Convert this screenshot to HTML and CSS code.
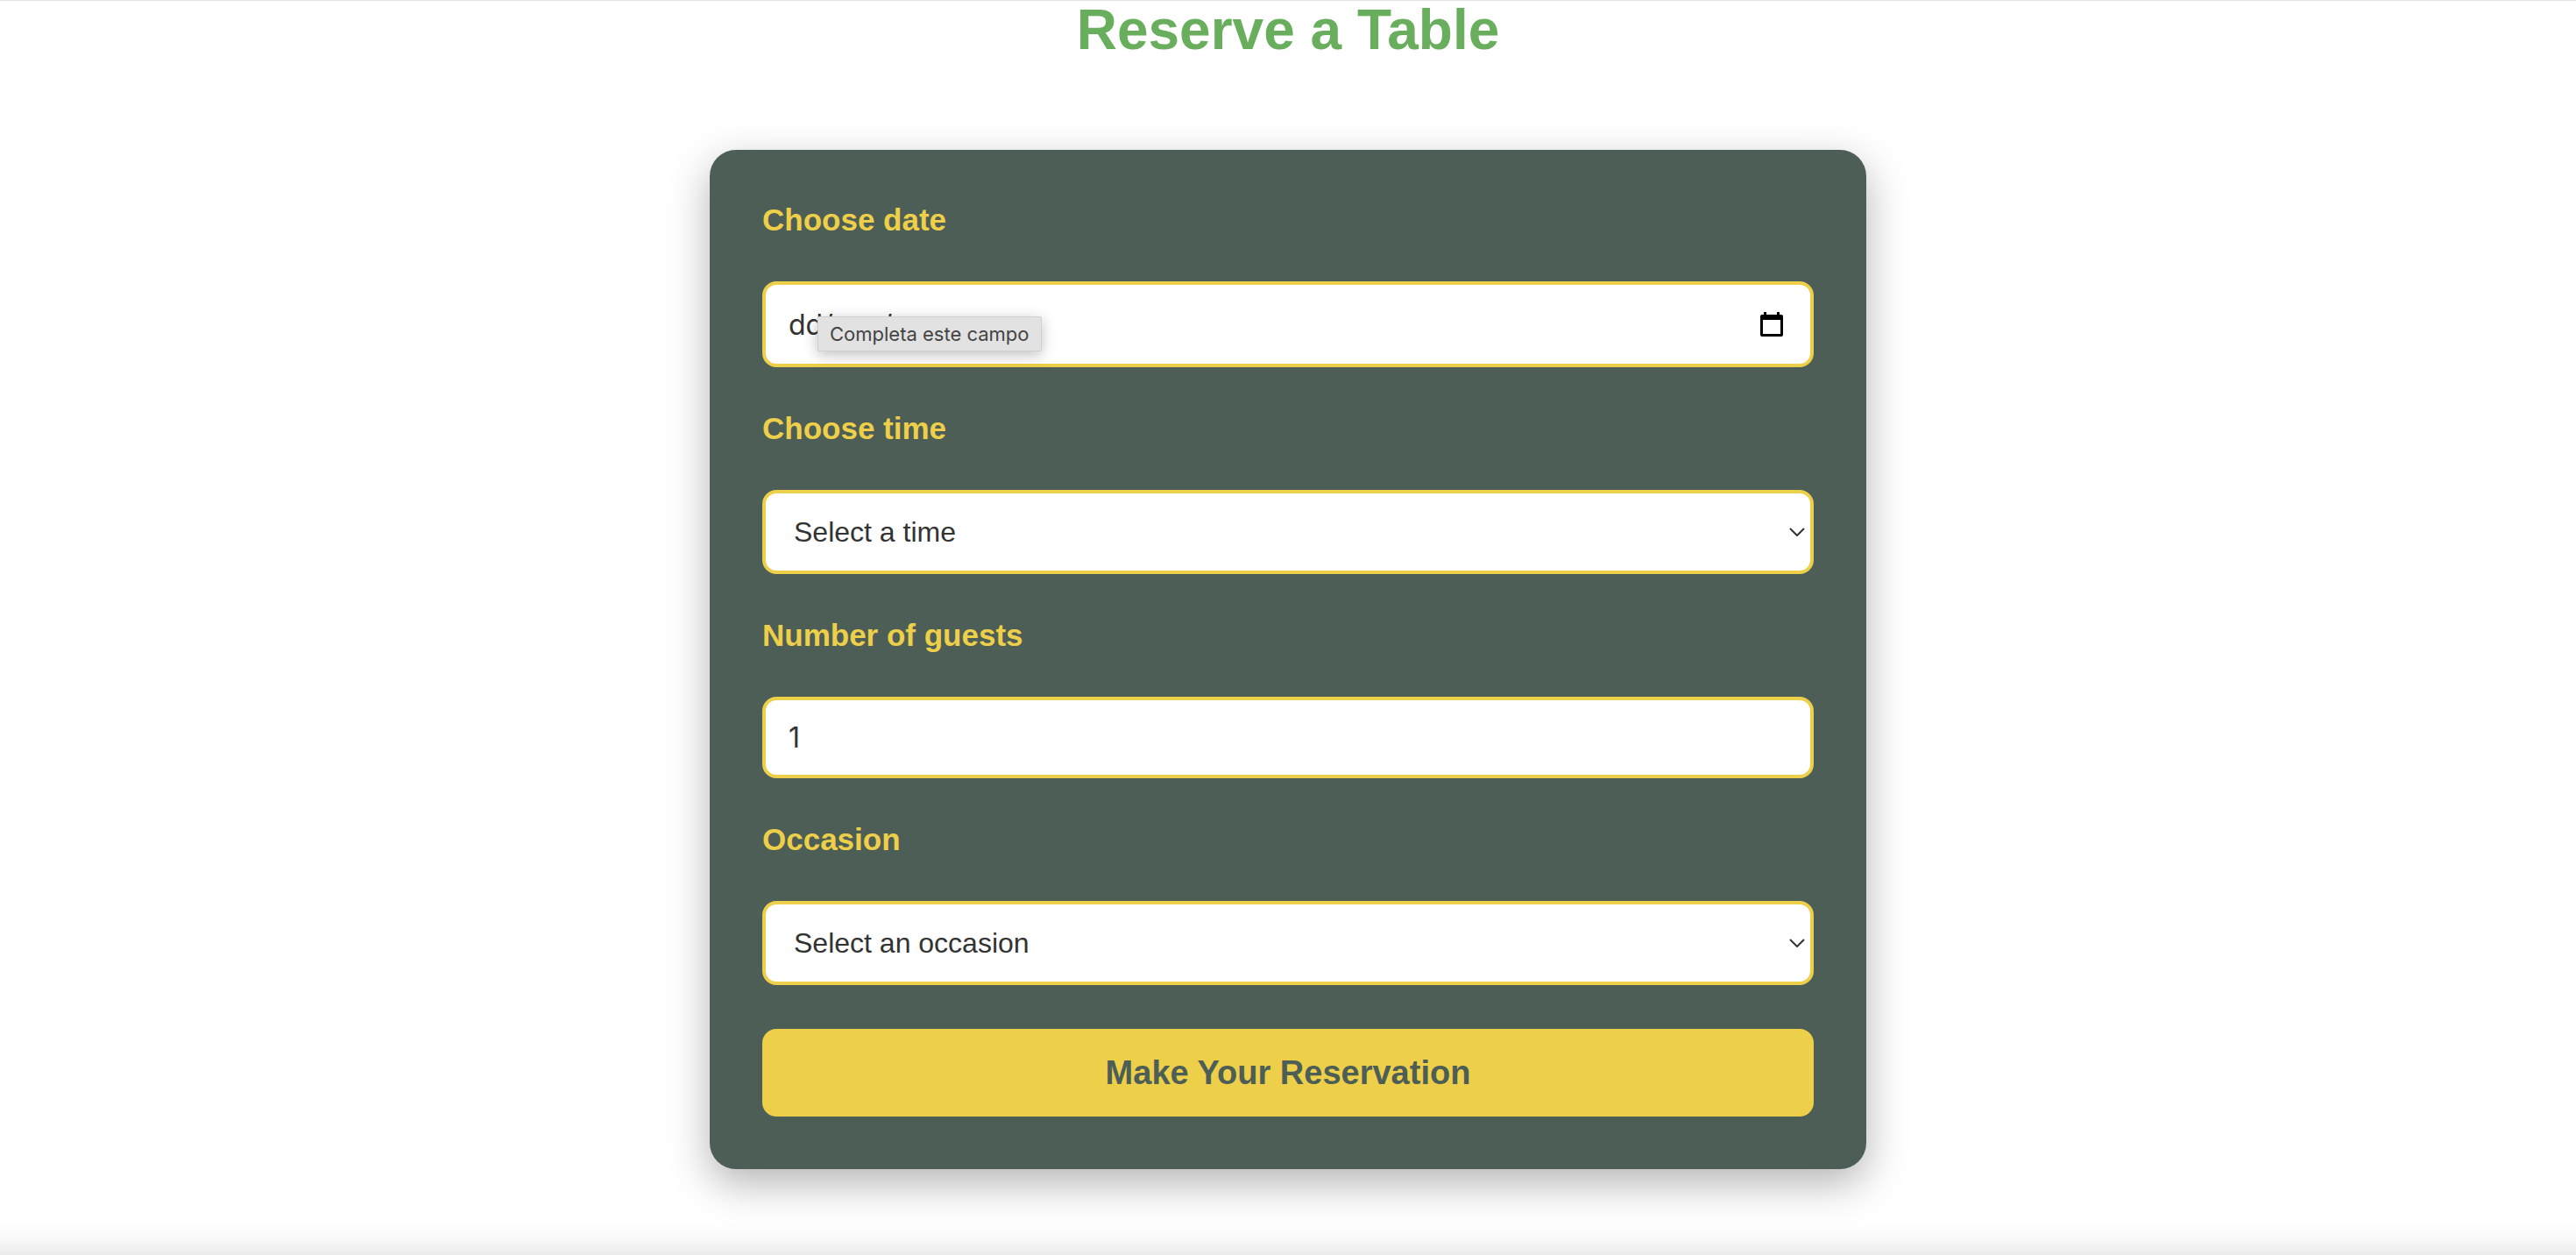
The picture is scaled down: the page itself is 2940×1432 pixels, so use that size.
FILE: index.html
```html
<!DOCTYPE html>
<html lang="en">
<head>
  <meta charset="utf-8">
  <meta name="viewport" content="width=device-width, initial-scale=1">
  <title>Reserve a Table</title>
  <link rel="stylesheet" href="styles.css">
</head>
<body>
  <main class="booking">
    <h1 class="booking-title">Reserve a Table</h1>
    <form class="booking-form">
      <label class="label" for="date">Choose date</label>
      <div class="field">
        <input class="control control-date" id="date" type="text" placeholder="dd/mm/aaaa" required>
        <svg class="icon-calendar" viewBox="0 0 26 28" aria-hidden="true">
          <path fill-rule="evenodd" d="M4 0h3v3h12V0h3v3h2a2 2 0 0 1 2 2v21a2 2 0 0 1-2 2H2a2 2 0 0 1-2-2V5a2 2 0 0 1 2-2h2zM3 9v16h20V9z"/>
        </svg>
        <span class="tooltip" role="tooltip">Completa este campo</span>
      </div>

      <label class="label" for="time">Choose time</label>
      <div class="field">
        <select class="control control-select" id="time">
          <option>Select a time</option>
        </select>
        <svg class="icon-chevron" viewBox="0 0 18 10" aria-hidden="true"><path d="M1 1l8 8 8-8"/></svg>
      </div>

      <label class="label" for="guests">Number of guests</label>
      <div class="field">
        <input class="control control-number" id="guests" type="number" min="1" max="10" value="1">
      </div>

      <label class="label" for="occasion">Occasion</label>
      <div class="field">
        <select class="control control-select" id="occasion">
          <option>Select an occasion</option>
        </select>
        <svg class="icon-chevron" viewBox="0 0 18 10" aria-hidden="true"><path d="M1 1l8 8 8-8"/></svg>
      </div>

      <button class="submit" type="submit">Make Your Reservation</button>
    </form>
  </main>
  <footer class="footer"></footer>
</body>
</html>
```
FILE: styles.css
```css
* {
  box-sizing: border-box;
}

body {
  display: flex;
  flex-direction: column;
  min-height: 100vh;
  margin: 0;
  border-top: 1px solid #e2e2e2;
  background: #fff;
  font-family: "Liberation Sans", Arial, sans-serif;
}

.booking {
  display: flex;
  flex: 1;
  flex-direction: column;
  align-items: center;
  gap: 104px;
}

.booking-title {
  margin: 0;
  color: #69ae5d;
  font-size: 64px;
  line-height: 66px;
}

.booking-form {
  display: grid;
  gap: 50px;
  width: 100%;
  max-width: 1320px;
  padding: 60px;
  border-radius: 30px;
  background: #4d5e57;
  box-shadow: 0 16px 48px rgba(0, 0, 0, 0.3);
}

.label {
  color: #edcf49;
  font-size: 35px;
  font-weight: bold;
  line-height: 40px;
}

.field {
  position: relative;
  display: grid;
  align-items: center;
}

.field > .control,
.field > svg {
  grid-area: 1 / 1;
}

.control {
  appearance: none;
  width: 100%;
  margin: 0;
  padding: 24px 26px;
  border: 4px solid #edcf49;
  border-radius: 16px;
  background: #fff;
  color: #333;
  font-family: inherit;
  font-size: 32px;
  line-height: 40px;
}

.control-date,
.control-number {
  font-family: Inter, sans-serif;
}

.control-date {
  height: 98px;
}

.control-date::placeholder {
  color: #333;
  opacity: 1;
}

.control-select {
  height: 96px;
  padding: 24px 32px;
}

.control-number {
  height: 93px;
  appearance: textfield;
}

.icon-calendar,
.icon-chevron {
  justify-self: end;
  pointer-events: none;
}

.icon-calendar {
  width: 26px;
  height: 28px;
  margin-right: 35px;
  fill: #000;
}

.icon-chevron {
  width: 18px;
  height: 10px;
  margin-right: 10px;
  fill: none;
  stroke: #333;
  stroke-width: 2;
}

.tooltip {
  position: absolute;
  top: 40px;
  left: 63px;
  padding: 5px 13px;
  border: 1px solid #d0d0d0;
  border-radius: 2px;
  background: #e2e2e2;
  box-shadow: 0 4px 16px rgba(0, 0, 0, 0.25);
  color: #444;
  font-family: Inter, sans-serif;
  font-size: 22px;
  line-height: 28px;
  white-space: nowrap;
}

.submit {
  padding: 28px;
  border: 0;
  border-radius: 16px;
  background: #edcf49;
  color: #4d5e57;
  font-family: inherit;
  font-size: 38px;
  font-weight: bold;
  line-height: 44px;
}

.footer {
  height: 40px;
  background: linear-gradient(transparent, rgba(0, 0, 0, 0.02) 50%, rgba(0, 0, 0, 0.08));
}
```
